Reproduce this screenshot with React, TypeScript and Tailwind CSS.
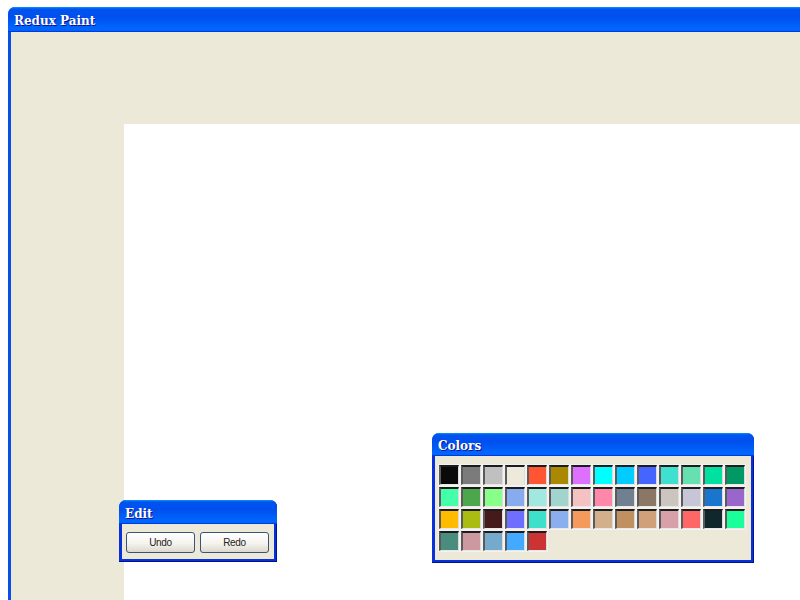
import React from "react";

const palette = [
  "#0a0a0a", "#7b7b7b", "#c0c0c0", "#eeeadb", "#ff5533", "#aa8800", "#dd70ff", "#00ffff", "#00ccff", "#4466ff", "#40e0d0", "#66e0b0", "#00e0a0", "#009966",
  "#44ffaa", "#4ca64c", "#88ff88", "#88aaee", "#a0e8e0", "#a0d4cc", "#f4c2c2", "#ff88aa", "#708090", "#8b7766", "#ccc4be", "#c6c6d6", "#1a75cf", "#9966cc",
  "#ffbb00", "#aabb11", "#441a1a", "#6f6fff", "#3ee0cc", "#8aaeee", "#f49a5c", "#d2b08c", "#c09060", "#cfa07a", "#d8a0a8", "#ff6666", "#10282c", "#1aff9a",
  "#4a8c7e", "#cc99a0", "#76aacc", "#44aaff", "#cc3333",
];

const TitleBar = ({ title, h }: { title: string; h: string }) => (
  <div
    className={`${h} flex items-center pt-[3px] px-[6px] rounded-t-[7px] bg-[linear-gradient(180deg,#0997ff,#0053ee_8%,#0050ee_40%,#0066ff_88%,#0066ff_93%,#005bff_95%,#003dd7_96%,#003dd7)] text-white font-bold text-[12px] font-['DejaVu_Serif',serif] [text-shadow:1px_1px_#0f1089]`}
  >
    {title}
  </div>
);

const XpButton = ({ label }: { label: string }) => (
  <button className="w-[69px] h-[21px] rounded-[3px] border border-[#3b5378] bg-[linear-gradient(180deg,#ffffff,#f4f3ee_55%,#dcd8ce)] text-[10px] text-[#222] font-['Liberation_Sans',sans-serif] tracking-[-0.3px]">
    {label}
  </button>
);

export default function App() {
  return (
    <div className="relative w-[800px] h-[600px] overflow-hidden bg-white">
      {/* main window */}
      <div className="absolute left-[8px] top-[7px] w-[820px] h-[620px] flex flex-col rounded-t-[7px] bg-[#0a4ee8]">
        <TitleBar title="Redux Paint" h="h-[25px]" />
        <div className="flex-1 flex ml-[3px] bg-[#ece9d8] pl-[113px] pt-[92px]">
          <div className="flex-1 bg-white" />
        </div>
      </div>

      {/* edit window */}
      <div className="absolute left-[119px] top-[500px] w-[158px] flex flex-col rounded-t-[7px] bg-[#0831d9] shadow-[inset_-1px_-1px_#00138c]">
        <TitleBar title="Edit" h="h-[24px]" />
        <div className="mx-[3px] mb-[3px] bg-[#ece9d8] flex gap-[5px] pl-[4px] pt-[8px] pb-[6px]">
          <XpButton label="Undo" />
          <XpButton label="Redo" />
        </div>
      </div>

      {/* colors window */}
      <div className="absolute left-[432px] top-[433px] w-[322px] h-[130px] flex flex-col rounded-t-[7px] bg-[#0831d9] shadow-[inset_-1px_-1px_#00138c]">
        <TitleBar title="Colors" h="h-[23px]" />
        <div className="flex-1 mx-[3px] mb-[3px] bg-[#ece9d8] pl-[3px] pt-[8px]">
          <div className="grid grid-cols-[repeat(14,22px)]">
            {palette.map((c) => (
              <div key={c} className="w-[22px] h-[22px] p-[1px] bg-[#f3f2ee]">
                <div
                  className="w-[20px] h-[20px] border-t-2 border-l-2 border-r border-b border-t-[#1c1c1c] border-l-[#5a5a5a] border-r-[#dcdcdc] border-b-[#e8e8e8]"
                  style={{ backgroundColor: c }}
                />
              </div>
            ))}
          </div>
        </div>
      </div>
    </div>
  );
}
